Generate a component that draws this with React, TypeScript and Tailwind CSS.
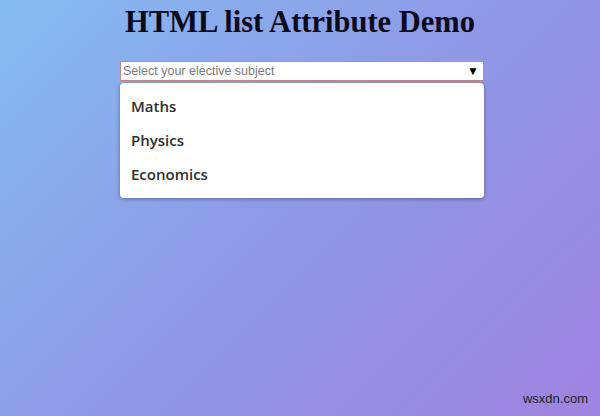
import React from "react";

export default function App() {
  const subjects = ["Maths", "Physics", "Economics"];

  return (
    <div className="relative w-[600px] h-[416px] overflow-hidden bg-[linear-gradient(135deg,#84bcf1_0%,#9098e6_50%,#9e84e0_100%)]">
      <h1 className="pt-[5px] text-center text-[30.5px] leading-[35px] font-bold text-[#0a0a1a] [font-family:'Liberation_Serif',serif]">
        HTML list Attribute Demo
      </h1>

      <div className="ml-[120px] mt-[21px] w-[364px]">
        {/* INPUT */}
        <div className="flex items-center h-[20px] bg-white border border-[#c98585] px-[2px]">
          <span className="flex-1 text-[12.5px] text-[#7a7a7a] [font-family:'Liberation_Sans',sans-serif]">
            Select your elective subject
          </span>
          <span className="text-[12px] text-black mr-[2px] leading-none">▼</span>
        </div>

        {/* LIST */}
        <div className="mt-[2px] h-[115px] bg-white rounded-[4px] shadow-[0_1px_4px_rgba(0,0,0,0.35)] pt-[13px] pl-[11px]">
          {subjects.map((s) => (
            <div
              key={s}
              className="h-[34px] text-[15px] leading-[20px] font-semibold text-[#2e2e2e] [font-family:'Open_Sans',sans-serif]"
            >
              {s}
            </div>
          ))}
        </div>
      </div>

      <div className="absolute right-[12px] bottom-[8px] text-[13px] text-[#222] [font-family:'Liberation_Sans',sans-serif]">
        wsxdn.com
      </div>
    </div>
  );
}
